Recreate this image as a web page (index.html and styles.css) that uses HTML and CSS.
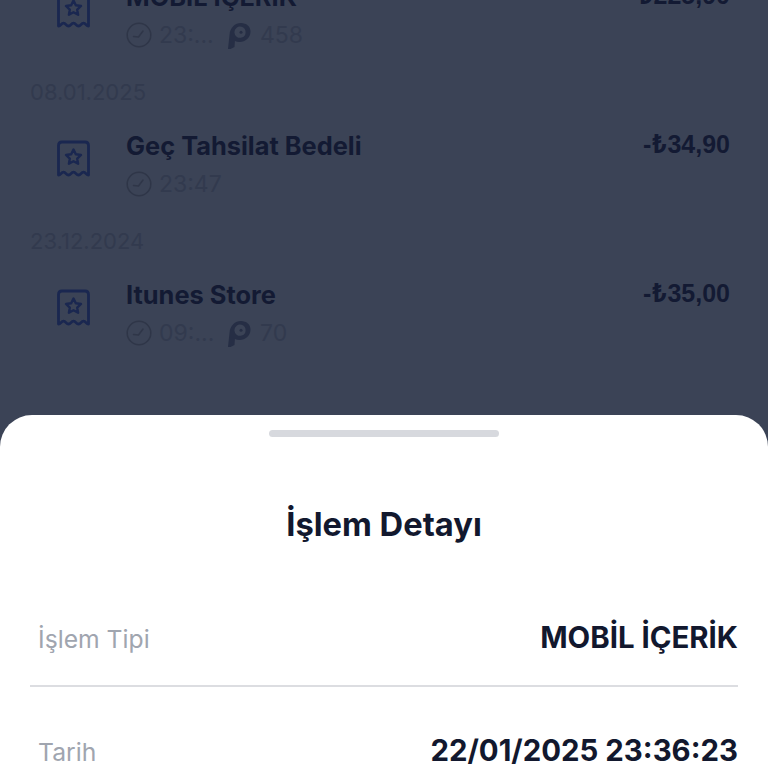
FILE: index.html
```html
<!DOCTYPE html>
<html lang="tr">
<head>
<meta charset="utf-8">
<title>İşlem Detayı</title>
<link rel="stylesheet" href="styles.css">
</head>
<body>
<svg class="defs" width="0" height="0" aria-hidden="true">
  <symbol id="receipt" viewBox="0 0 34 38">
    <path d="M2 35V5.500C2 3.300 3.500 2 5.500 2h23C30.500 2 32 3.300 32 5.500V35c-2.500 0-2.500-2.800-5-2.800s-2.500 2.800-5 2.800-2.500-2.800-5-2.800-2.500 2.800-5 2.800-2.500-2.800-5-2.800S4.500 35 2 35Z" fill="none" stroke="currentColor" stroke-width="2.800" stroke-linejoin="round"/>
    <path d="M17 9.500l2.300 4.800 5.200.7-3.800 3.600.9 5.200-4.600-2.500-4.600 2.500.9-5.200-3.800-3.600 5.200-.7Z" fill="none" stroke="currentColor" stroke-width="2.400" stroke-linejoin="round"/>
  </symbol>
  <symbol id="clock" viewBox="0 0 26 26">
    <circle cx="13" cy="13" r="11.800" fill="none" stroke="currentColor" stroke-width="1.500"/>
    <path d="M7.500 14.500l5 .5 4.500-6" fill="none" stroke="currentColor" stroke-width="1.500" stroke-linecap="round" stroke-linejoin="round"/>
  </symbol>
  <symbol id="points" viewBox="0 0 24 27">
    <path fill-rule="evenodd" d="M1 27l1.500-14C3 5.500 8 1 14 1c5.500 0 9.500 3.500 9.500 8.500C23.500 15.500 18.500 20 12.500 20c-1.700 0-3.200-.3-4.600-.9L7.500 25 3.500 27ZM14.500 4.800a5.600 5.600 0 1 0 0 10.800 5.600 5.600 0 0 0 0-10.800Z" fill="currentColor"/>
    <circle cx="14" cy="10.200" r="1.500" fill="currentColor"/>
  </symbol>
</svg>
<div class="screen">
  <main class="list">
    <article class="row">
      <svg class="receipt"><use href="#receipt"/></svg>
      <div class="info">
        <h2 class="name">MOBİL İÇERİK</h2>
        <div class="meta">
          <svg class="clock"><use href="#clock"/></svg><span class="time">23:...</span>
          <svg class="points"><use href="#points"/></svg><span>458</span>
        </div>
      </div>
      <div class="amount">-₺225,90</div>
    </article>
    <h3 class="date">08.01.2025</h3>
    <article class="row">
      <svg class="receipt"><use href="#receipt"/></svg>
      <div class="info">
        <h2 class="name">Geç Tahsilat Bedeli</h2>
        <div class="meta">
          <svg class="clock"><use href="#clock"/></svg><span>23:47</span>
        </div>
      </div>
      <div class="amount">-₺34,90</div>
    </article>
    <h3 class="date">23.12.2024</h3>
    <article class="row">
      <svg class="receipt"><use href="#receipt"/></svg>
      <div class="info">
        <h2 class="name">Itunes Store</h2>
        <div class="meta">
          <svg class="clock"><use href="#clock"/></svg><span class="time">09:...</span>
          <svg class="points"><use href="#points"/></svg><span>70</span>
        </div>
      </div>
      <div class="amount">-₺35,00</div>
    </article>
  </main>
  <section class="sheet">
    <div class="handle"></div>
    <h1 class="title">İşlem Detayı</h1>
    <div class="detail detail-first">
      <span class="label">İşlem Tipi</span>
      <span class="value">MOBİL İÇERİK</span>
    </div>
    <div class="detail">
      <span class="label">Tarih</span>
      <span class="value">22/01/2025 23:36:23</span>
    </div>
  </section>
</div>
</body>
</html>
```
FILE: styles.css
```css
* { box-sizing: border-box; }
html, body { margin: 0; padding: 0; }
body { font-family: Inter, "Liberation Sans", sans-serif; background: #3b4356; }
.defs { position: absolute; }
.screen { position: relative; width: 768px; height: 768px; overflow: hidden; background: #3b4356; }

.list { display: flex; flex-direction: column; margin-top: -21px; padding: 0 38px 0 30px; }
.row { display: flex; align-items: flex-start; height: 98px; padding-left: 27px; }
.receipt { width: 35px; height: 38px; margin-top: 12px; margin-left: -1px; color: #1a2750; flex: none; }
.info { flex: 1; margin-left: 35px; }
.name { margin: 0; font-size: 25.4px; line-height: 36px; font-weight: 700; color: #131a33; white-space: nowrap; }
.meta { display: flex; align-items: center; height: 26px; margin-top: 7px; font-size: 23px; color: #323a4e; }
.clock { width: 26px; height: 26px; color: #2f3648; flex: none; }
.time { width: 68px; margin-left: 7px; }
.meta > .clock + span { margin-left: 7px; }
.points { width: 24px; height: 27px; color: #262e45; margin-right: 9px; flex: none; }
.amount { font-family: "Liberation Sans", Inter, sans-serif; font-size: 25px; line-height: 36px; font-weight: 700; color: #131a33; white-space: nowrap; margin-top: -2px; }
.date { margin: 0; height: 51px; font-size: 22px; line-height: 30px; font-weight: 400; color: #323a4e; }

.sheet { position: absolute; left: 0; right: 0; top: 415px; height: 353px; background: #fff; border-radius: 32px 32px 0 0; padding: 15px 30px 0; overflow: hidden; }
.handle { width: 230px; height: 7px; margin: 0 auto; border-radius: 4px; background: #d7d9de; }
.title { margin: 0; padding-top: 67px; font-size: 32.7px; line-height: 40px; font-weight: 700; color: #12182e; text-align: center; }
.detail { display: flex; justify-content: space-between; align-items: center; height: 130px; padding-left: 8px; flex: none; }
.detail-first { height: 94px; margin-top: 49px; border-bottom: 2px solid #dcdde1; }
.label { font-size: 24.7px; color: #a0a5af; }
.value { font-size: 29.4px; font-weight: 700; color: #12182e; margin-bottom: 4px; }
```
